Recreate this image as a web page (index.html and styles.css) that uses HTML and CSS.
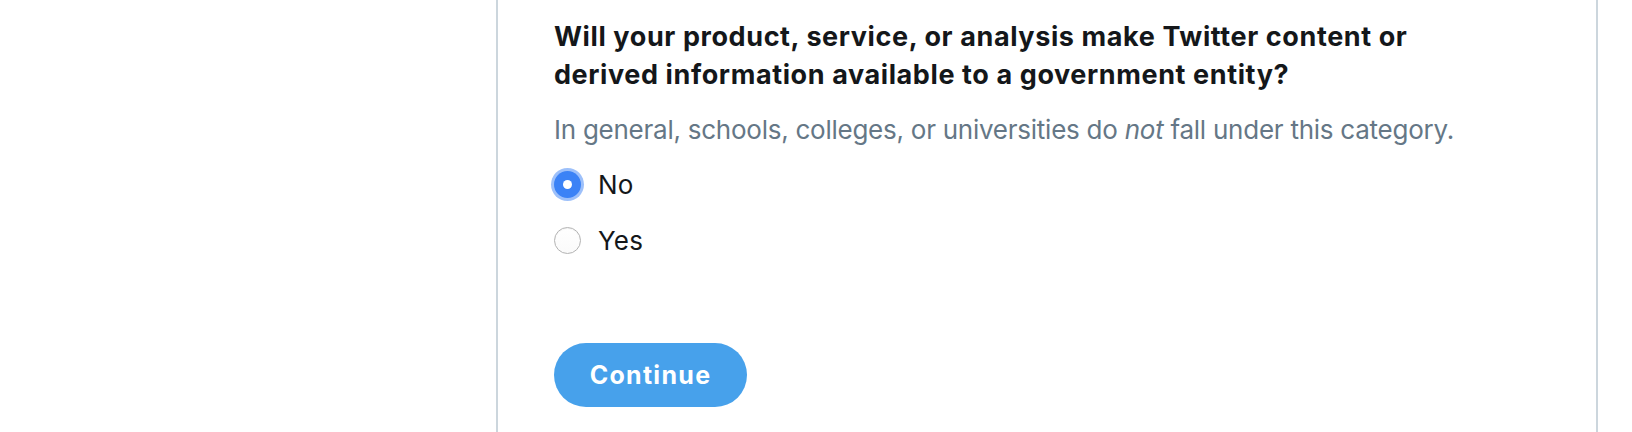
FILE: index.html
```html
<!DOCTYPE html>
<html lang="en">
<head>
<meta charset="utf-8">
<title>Government entity</title>
<link rel="stylesheet" href="styles.css">
</head>
<body>
<div class="page">
  <main class="panel">
    <h2 class="question">Will your product, service, or analysis make Twitter content or derived information available to a government entity?</h2>
    <p class="hint">In general, schools, colleges, or universities do <em>not</em> fall under this category.</p>
    <div class="options">
      <label class="option"><input type="radio" name="gov" class="radio" checked><span>No</span></label>
      <label class="option"><input type="radio" name="gov" class="radio"><span>Yes</span></label>
    </div>
    <button class="continue" type="button">Continue</button>
  </main>
</div>
</body>
</html>
```
FILE: styles.css
```css
* { box-sizing: border-box; }
html, body { margin: 0; padding: 0; background: #fff; }
body {
  font-family: Inter, "Noto Sans", sans-serif;
  color: #14171a;
  height: 432px;
  overflow: hidden;
}
.page {
  display: flex;
  padding-left: 496px;
  height: 100%;
}
.panel {
  width: 1102px;
  height: 100%;
  border-left: 2px solid #ccd6dd;
  border-right: 2px solid #ccd6dd;
  padding: 18px 56px 0 56px;
  display: flex;
  flex-direction: column;
  align-items: flex-start;
}
.question {
  margin: 0;
  max-width: 900px;
  font-size: 27px;
  line-height: 38px;
  font-weight: 700;
  letter-spacing: 0.6px;
  color: #14171a;
}
.hint {
  margin: 18px 0 8px;
  font-size: 26px;
  line-height: 36px;
  letter-spacing: -0.25px;
  color: #657786;
}
.hint em { font-style: italic; }
.options {
  display: flex;
  flex-direction: column;
}
.option {
  display: flex;
  align-items: center;
  height: 56px;
  gap: 17px;
  font-size: 26px;
  letter-spacing: 0.2px;
  color: #14171a;
  cursor: pointer;
}
.radio {
  appearance: none;
  -webkit-appearance: none;
  margin: 0;
  width: 27px;
  height: 27px;
  border-radius: 50%;
  border: 1.5px solid #b3b3b3;
  background: linear-gradient(#fff, #fafafa);
  box-shadow: inset 0 1px 1px rgba(0,0,0,0.05);
  position: relative;
}
.radio:checked {
  border: none;
  background: #3b82f6;
  box-shadow: 0 0 0 3px rgba(59,130,246,0.5);
}
.radio:checked::after {
  content: "";
  position: absolute;
  left: 50%;
  top: 50%;
  width: 9px;
  height: 9px;
  margin: -4.5px 0 0 -4.5px;
  border-radius: 50%;
  background: #fff;
}
.continue {
  margin-top: 75px;
  width: 193px;
  height: 64px;
  border: none;
  border-radius: 32px;
  background: #47a1eb;
  color: #fff;
  font-family: Inter, "Noto Sans", sans-serif;
  font-size: 25px;
  font-weight: 700;
  letter-spacing: 1.3px;
  padding: 0;
}
```
